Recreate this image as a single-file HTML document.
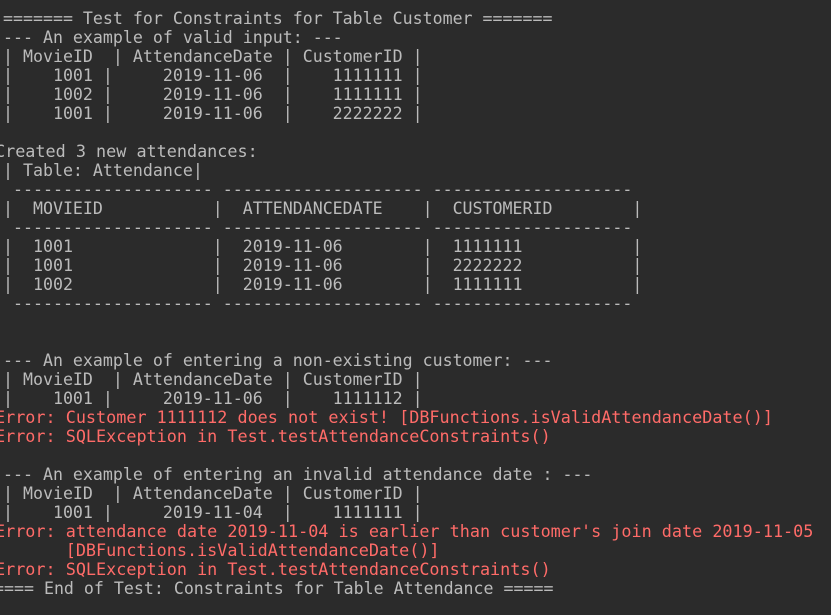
<!DOCTYPE html>
<html><head><meta charset="utf-8"><style>
html,body{margin:0;padding:0;}
body{width:831px;height:615px;background:#2b2b2b;overflow:hidden;position:relative;
font-family:"DejaVu Sans Mono","Liberation Mono",monospace;font-size:16.6px;color:#bbbbbb;}
.l{position:absolute;left:3px;white-space:pre;line-height:19px;height:19px;margin-top:1px;}
.s{left:-5px;font-size:16.8px;}
.r{color:#ff6b68;}
</style></head><body>
<div class="l" style="top:8px">======= Test for Constraints for Table Customer =======</div>
<div class="l" style="top:27px">--- An example of valid input: ---</div>
<div class="l" style="top:46px">| MovieID  | AttendanceDate | CustomerID |</div>
<div class="l" style="top:65px">|    1001 |     2019-11-06  |    1111111 |</div>
<div class="l" style="top:84px">|    1002 |     2019-11-06  |    1111111 |</div>
<div class="l" style="top:103px">|    1001 |     2019-11-06  |    2222222 |</div>
<div class="l s" style="top:141px">Created 3 new attendances:</div>
<div class="l" style="top:160px">| Table: Attendance|</div>
<div class="l" style="top:179px"> -------------------- -------------------- --------------------</div>
<div class="l" style="top:198px">|  MOVIEID           |  ATTENDANCEDATE    |  CUSTOMERID        |</div>
<div class="l" style="top:217px"> -------------------- -------------------- --------------------</div>
<div class="l" style="top:236px">|  1001              |  2019-11-06        |  1111111           |</div>
<div class="l" style="top:255px">|  1001              |  2019-11-06        |  2222222           |</div>
<div class="l" style="top:274px">|  1002              |  2019-11-06        |  1111111           |</div>
<div class="l" style="top:293px"> -------------------- -------------------- --------------------</div>
<div class="l" style="top:350px">--- An example of entering a non-existing customer: ---</div>
<div class="l" style="top:369px">| MovieID  | AttendanceDate | CustomerID |</div>
<div class="l" style="top:388px">|    1001 |     2019-11-06  |    1111112 |</div>
<div class="l s r" style="top:407px">Error: Customer 1111112 does not exist! [DBFunctions.isValidAttendanceDate()]</div>
<div class="l s r" style="top:426px">Error: SQLException in Test.testAttendanceConstraints()</div>
<div class="l" style="top:464px">--- An example of entering an invalid attendance date : ---</div>
<div class="l" style="top:483px">| MovieID  | AttendanceDate | CustomerID |</div>
<div class="l" style="top:502px">|    1001 |     2019-11-04  |    1111111 |</div>
<div class="l s r" style="top:521px">Error: attendance date 2019-11-04 is earlier than customer's join date 2019-11-05</div>
<div class="l s r" style="top:540px">       [DBFunctions.isValidAttendanceDate()]</div>
<div class="l s r" style="top:559px">Error: SQLException in Test.testAttendanceConstraints()</div>
<div class="l" style="top:578px;left:-6px">==== End of Test: Constraints for Table Attendance =====</div>
</body></html>
